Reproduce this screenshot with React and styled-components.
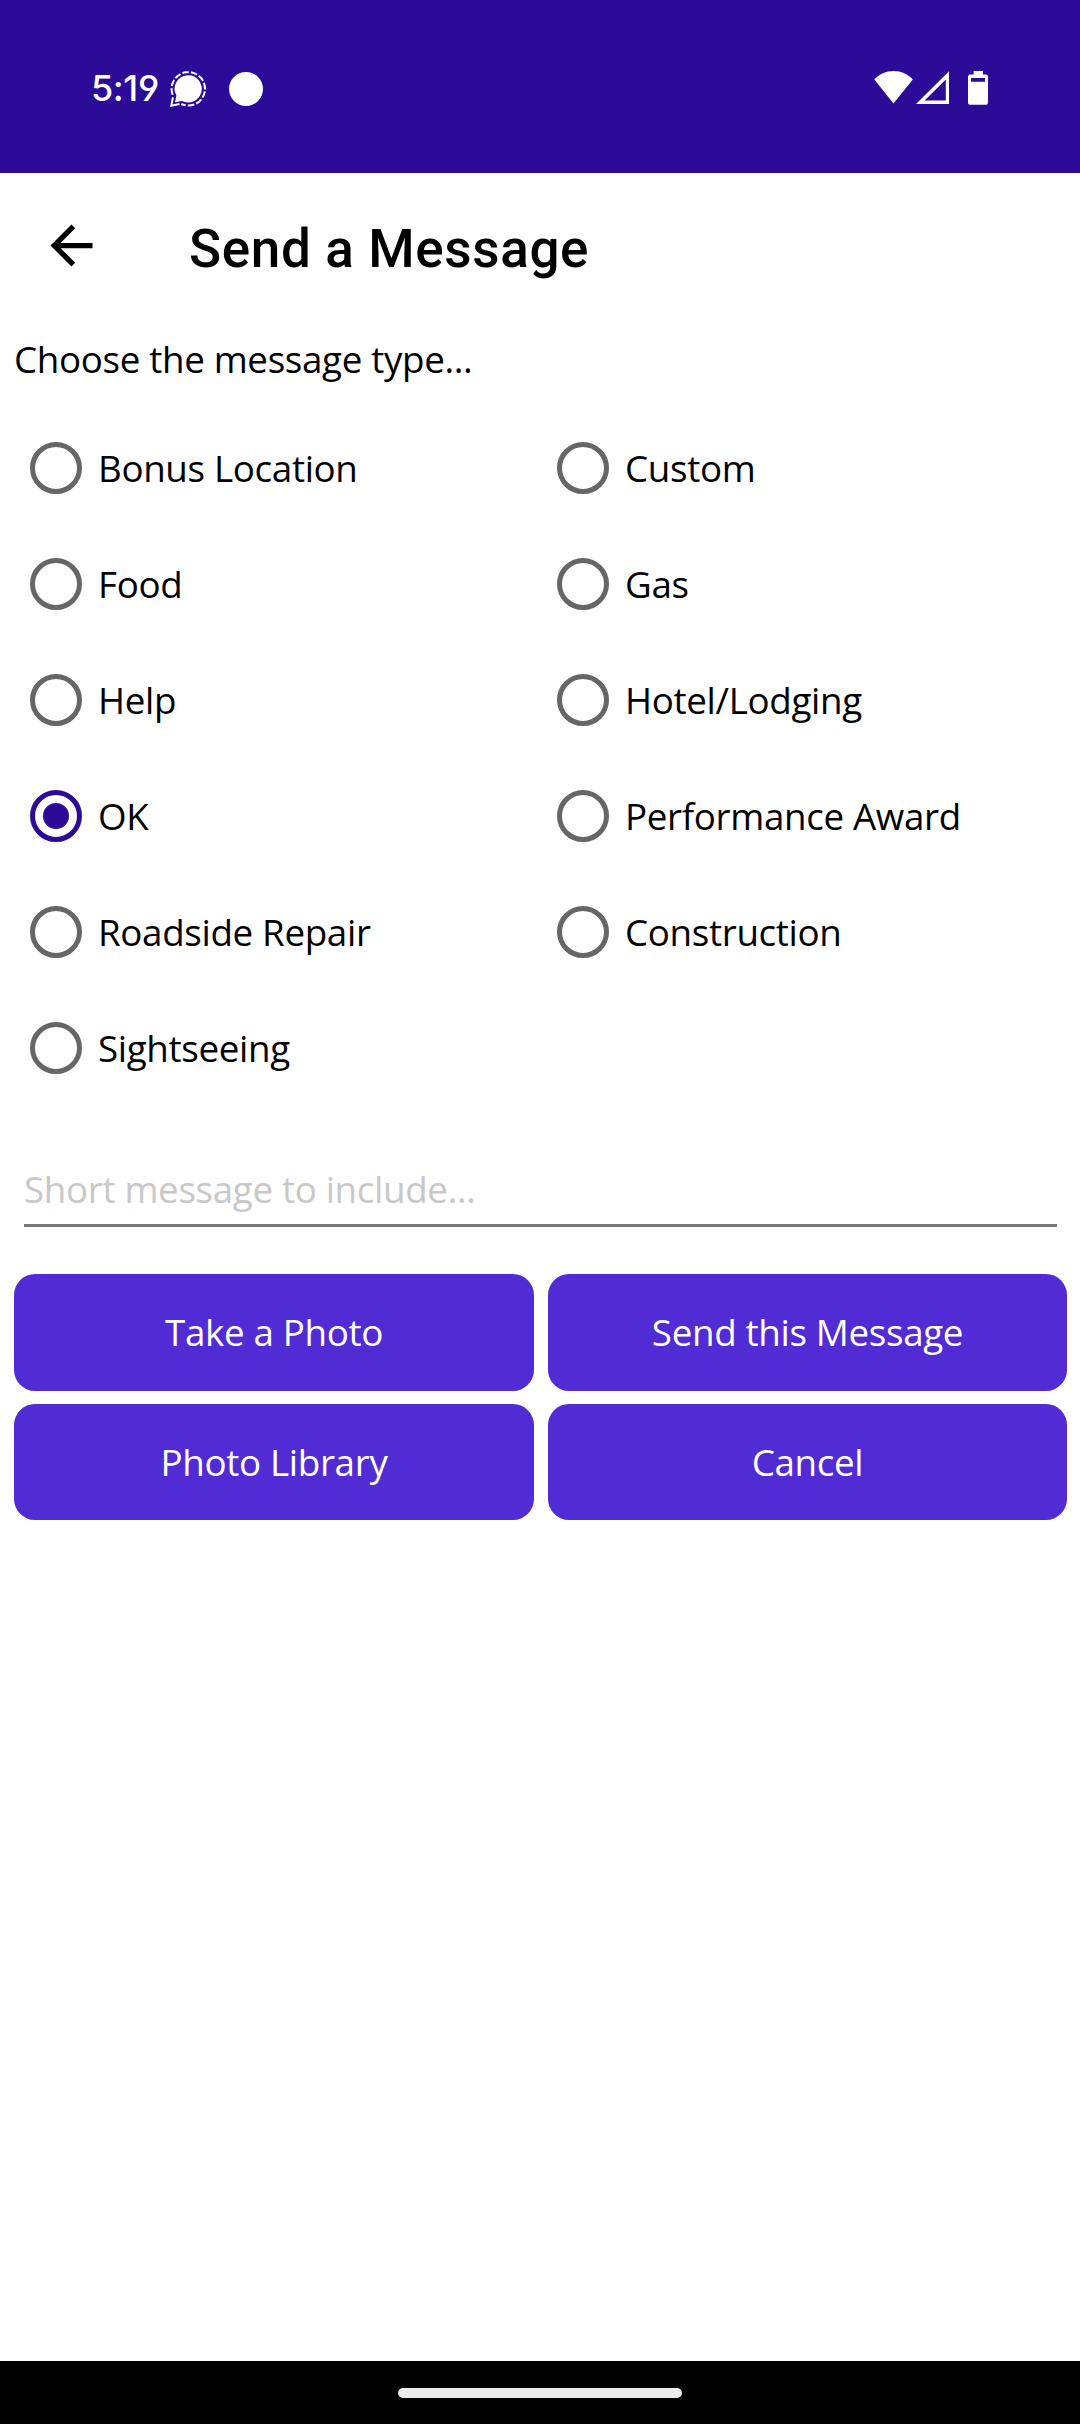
import React, { useState } from 'react'
import styled, { createGlobalStyle } from 'styled-components'
import { MdArrowBack } from 'react-icons/md'

const messageTypes = [
    'Bonus Location',
    'Custom',
    'Food',
    'Gas',
    'Help',
    'Hotel/Lodging',
    'OK',
    'Performance Award',
    'Roadside Repair',
    'Construction',
    'Sightseeing',
]

function SignalIcon() {
    return (
        <svg width='36' height='36' viewBox='0 0 36 36' fill='none'>
            <path d='M18.3 4.2a13.6 13.6 0 1 1 -6.3 25.7L5 31.2L6.4 24.6A13.6 13.6 0 0 1 18.3 4.2Z' fill='#fff' />
            {/* dashed ring, open where the bubble tail goes */}
            <path
                d='M3.1 24.8A16.7 16.7 0 1 1 11.3 33'
                stroke='#fff'
                strokeWidth='2'
                strokeDasharray='6.6 2.05'
                strokeDashoffset='-1.2'
            />
            <path d='M2.9 26.4L1.3 34.7L9.4 33.1' stroke='#fff' strokeWidth='2' />
        </svg>
    )
}

function StatusIcons() {
    return (
        <svg width='116' height='36' viewBox='0 1 116 36' fill='#fff'>
            {/* wifi */}
            <path d='M0.3 9.6C5 4 12 1 19.5 1S34 4 38.8 9.6L19.5 33.6Z' />
            {/* mobile signal, empty */}
            <path fillRule='evenodd' d='M75 1.2V34H42ZM71.8 9.6L50.6 30.6H71.8Z' />
            {/* battery */}
            <path
                fillRule='evenodd'
                d='M99.7 1H109V4.6H112a2 2 0 0 1 2 2V32.8a2 2 0 0 1 -2 2H96a2 2 0 0 1 -2 -2V6.6a2 2 0 0 1 2 -2H99.7ZM97 8V11.8H111V8Z'
            />
        </svg>
    )
}

export default function App() {
    const [selected, setSelected] = useState('OK')
    const [message, setMessage] = useState('')

    return (
        <Screen>
            <GlobalStyle />
            <StatusBar>
                <Clock>5:19</Clock>
                <SignalIcon />
                <Dot />
                <Spacer />
                <StatusIcons />
            </StatusBar>
            <Toolbar>
                <BackButton aria-label='Back'>
                    <MdArrowBack size={63} />
                </BackButton>
                <Title>Send a Message</Title>
            </Toolbar>
            <Content>
                <Prompt>Choose the message type...</Prompt>
                <RadioGrid role='radiogroup'>
                    {messageTypes.map(type => (
                        <RadioRow
                            key={type}
                            role='radio'
                            aria-checked={selected === type}
                            onClick={() => setSelected(type)}>
                            <RadioCircle $checked={selected === type} />
                            {type}
                        </RadioRow>
                    ))}
                </RadioGrid>
                <MessageInput
                    placeholder='Short message to include...'
                    value={message}
                    onChange={e => setMessage(e.target.value)}
                />
                <ButtonGrid>
                    <ActionButton>Take a Photo</ActionButton>
                    <ActionButton>Send this Message</ActionButton>
                    <ActionButton>Photo Library</ActionButton>
                    <ActionButton onClick={() => setMessage('')}>Cancel</ActionButton>
                </ButtonGrid>
            </Content>
            <NavBar>
                <NavHandle />
            </NavBar>
        </Screen>
    )
}

const GlobalStyle = createGlobalStyle`
    *{
        box-sizing: border-box;
    }
    body{
        margin: 0;
        background: #fff;
    }
    button, input{
        font: inherit;
        letter-spacing: inherit;
        border: none;
        padding: 0;
    }
`

const Screen = styled.div`
    display: flex;
    flex-direction: column;
    width: 1080px;
    height: 2424px;
    background: #fff;
    color: #000;
    font-family: 'Open Sans', sans-serif;
    font-size: 36.75px;
    letter-spacing: -0.34px;
    line-height: 50px;
`

const StatusBar = styled.div`
    display: flex;
    align-items: center;
    height: 173px;
    padding: 5px 90px 0 91px;
    background: #2B0B98;
    color: #fff;
`

const Clock = styled.span`
    width: 79px;
    margin-bottom: 3px;
    font-family: Inter, sans-serif;
    font-size: 36px;
    font-weight: 500;
    font-feature-settings: 'cv04';
    letter-spacing: -0.4px;
    white-space: nowrap;
`

const Dot = styled.span`
    width: 34px;
    height: 34px;
    margin-left: 23px;
    border-radius: 50%;
    background: #fff;
`

const Spacer = styled.div`
    flex: 1;
`

const Toolbar = styled.header`
    display: flex;
    align-items: center;
    gap: 86px;
    height: 147px;
    padding-left: 40px;
`

const BackButton = styled.button`
    display: flex;
    margin-bottom: 2px;
    background: none;
    color: #000;
`

const Title = styled.h1`
    margin: 0;
    padding-top: 5px;
    font-family: Roboto, sans-serif;
    font-size: 53px;
    font-weight: 500;
    letter-spacing: 0.65px;
    line-height: 62px;
`

const Content = styled.main`
    display: flex;
    flex: 1;
    flex-direction: column;
    padding: 14px 13px 0 14px;
`

const Prompt = styled.p`
    margin: 0 0 26px;
`

const RadioGrid = styled.div`
    display: grid;
    grid-template-columns: 527px 1fr;
    grid-auto-rows: 116px;
`

const RadioRow = styled.div`
    display: flex;
    align-items: center;
    gap: 16px;
    padding-left: 16px;
    cursor: pointer;
`

const RadioCircle = styled.span`
    display: flex;
    align-items: center;
    justify-content: center;
    width: 52px;
    height: 52px;
    border: 5px solid ${props => props.$checked ? '#2B0B98' : '#666'};
    border-radius: 50%;
    &::after{
        content: '';
        width: 26px;
        height: 26px;
        border-radius: 50%;
        background: ${props => props.$checked ? '#2B0B98' : 'transparent'};
    }
`

const MessageInput = styled.input`
    height: 70px;
    margin: 51px 10px 47px 10px;
    padding-bottom: 3px;
    border-bottom: 3px solid #767676;
    border-radius: 0;
    background: none;
    outline: none;
    &::placeholder{
        color: #C8C8C8;
        opacity: 1;
    }
`

const ButtonGrid = styled.div`
    display: grid;
    grid-template-columns: 520px 519px;
    grid-template-rows: 117px 116px;
    gap: 13px 14px;
`

const ActionButton = styled.button`
    padding-bottom: 1px;
    border-radius: 21px;
    background: #512BD4;
    color: #fff;
    cursor: pointer;
`

const NavBar = styled.div`
    display: flex;
    justify-content: center;
    height: 63px;
    padding-top: 27px;
    background: #000;
`

const NavHandle = styled.div`
    width: 284px;
    height: 10px;
    border-radius: 5px;
    background: #EBEBEB;
`
